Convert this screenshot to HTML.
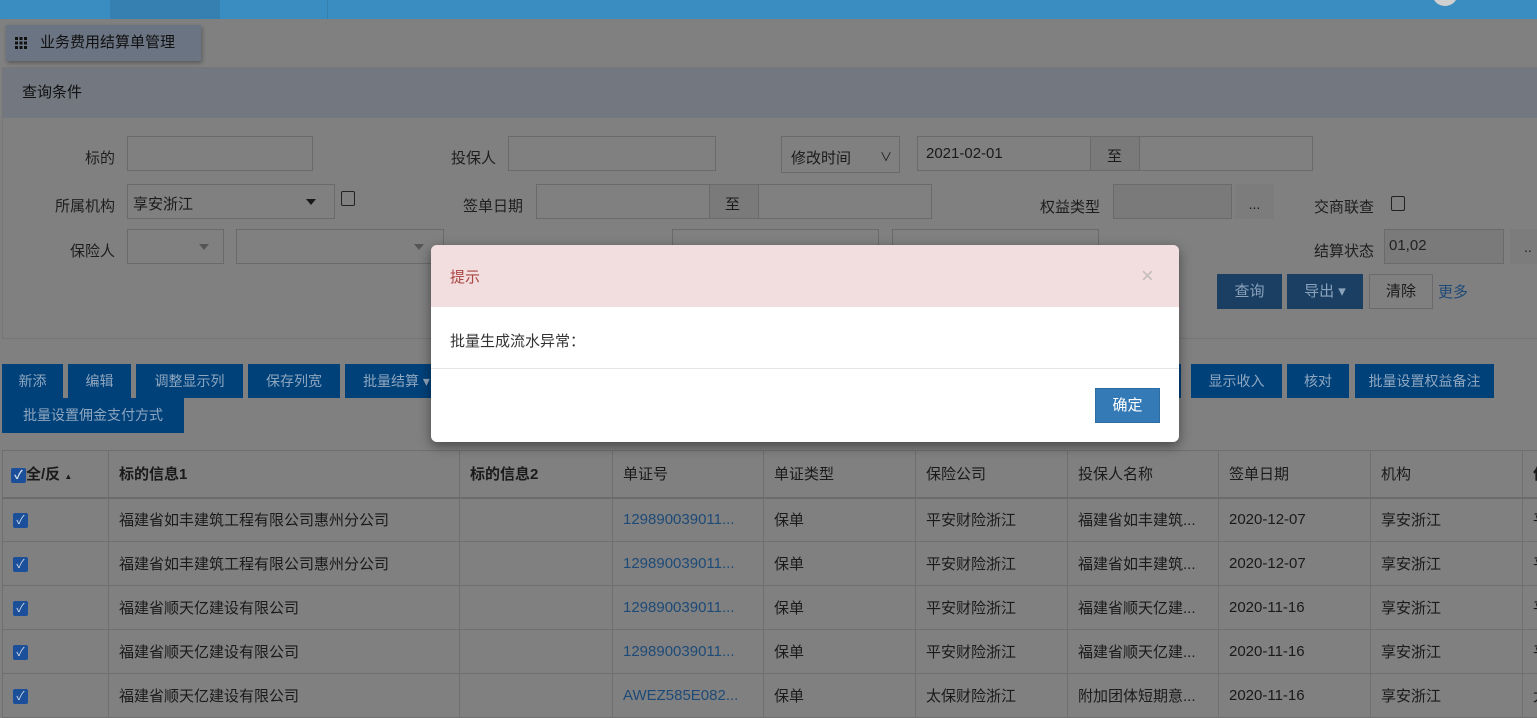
<!DOCTYPE html>
<html><head><meta charset="utf-8"><style>
*{margin:0;padding:0;box-sizing:border-box}
body{width:1537px;height:716px;overflow:hidden;background:#808080;font-family:"Liberation Sans","Noto Sans CJK SC",sans-serif;font-size:14px;color:#1a1a1a;position:relative}
.a{position:absolute}
.inp{position:absolute;border:1px solid #6a6a6a;background:#808080;height:35px}
.lbl{position:absolute;text-align:right;font-size:15px;color:#1e1e1e}
.btn{position:absolute;background:#00417a;color:#8fa6bf;font-size:14px;text-align:center;line-height:34px;height:34px}
.tri{position:absolute;width:0;height:0;border-left:5px solid transparent;border-right:5px solid transparent;border-top:6px solid #1a1a1a}
table{position:absolute;left:2px;top:450px;border-collapse:collapse;font-size:15px;table-layout:fixed;width:1560px}
td,th{border:1px solid #6f6f6f;height:44px;padding:0 10px;text-align:left;white-space:nowrap;overflow:hidden}
th{font-weight:bold;height:47px;border-bottom:2px solid #6c6c6c}
.lk{color:#1d4a77}
.cb{display:inline-block;width:15px;height:15px;background:#1b4f99;border-radius:2px;color:#cfd8e6;font-size:12px;line-height:15px;text-align:center;vertical-align:middle}
</style></head><body>
<div class="a" style="left:0;top:0;width:1537px;height:19px;background:#3a8dc0"></div>
<div class="a" style="left:110px;top:0;width:110px;height:19px;background:#3580b0"></div>
<div class="a" style="left:327px;top:0;width:1px;height:19px;background:#337fae"></div>
<div class="a" style="left:1432px;top:-20px;width:26px;height:26px;border-radius:50%;background:#d0d0d0"></div>

<div class="a" style="left:6px;top:25px;width:195px;height:36px;background:#6a7482;box-shadow:1px 2px 4px rgba(0,0,0,.3);font-size:15px;line-height:36px;padding-left:34px;color:#111;white-space:nowrap">业务费用结算单管理</div>
<svg class="a" style="left:15px;top:37px" width="12" height="12"><g fill="#111"><rect x="0" y="0" width="3" height="3"/><rect x="4.5" y="0" width="3" height="3"/><rect x="9" y="0" width="3" height="3"/><rect x="0" y="4.5" width="3" height="3"/><rect x="4.5" y="4.5" width="3" height="3"/><rect x="9" y="4.5" width="3" height="3"/><rect x="0" y="9" width="3" height="3"/><rect x="4.5" y="9" width="3" height="3"/><rect x="9" y="9" width="3" height="3"/></g></svg>

<div class="a" style="left:2px;top:67px;width:1540px;height:272px;border:1px solid #767676"></div>
<div class="a" style="left:3px;top:68px;width:1540px;height:50px;background:#727780;line-height:50px;padding-left:19px;font-size:15px;color:#111">查询条件</div>

<div class="lbl" style="left:40px;top:147px;width:75px">标的</div>
<div class="inp" style="left:127px;top:136px;width:186px"></div>
<div class="lbl" style="left:420px;top:147px;width:76px">投保人</div>
<div class="inp" style="left:508px;top:136px;width:208px"></div>
<div class="inp" style="left:781px;top:136px;width:119px;height:37px;padding:10px 0 0 9px;font-size:15px">修改时间</div>
<div class="a" style="left:880px;top:148px;font-size:12px">∨</div>
<div class="inp" style="left:917px;top:136px;width:174px;padding:8px 0 0 8px;font-size:15px">2021-02-01</div>
<div class="inp" style="left:1090px;top:136px;width:50px;background:#7a7a7a;padding:8px 0 0 16px;font-size:15px">至</div>
<div class="inp" style="left:1139px;top:136px;width:174px"></div>

<div class="lbl" style="left:30px;top:195px;width:85px">所属机构</div>
<div class="inp" style="left:127px;top:184px;width:208px;padding:8px 0 0 5px;font-size:15px">享安浙江</div>
<div class="tri" style="left:306px;top:199px"></div>
<div class="a" style="left:341px;top:191px;width:14px;height:15px;border:1px solid #222;border-radius:2px"></div>
<div class="lbl" style="left:430px;top:195px;width:93px">签单日期</div>
<div class="inp" style="left:536px;top:184px;width:174px"></div>
<div class="inp" style="left:709px;top:184px;width:50px;background:#7a7a7a;padding:8px 0 0 15px;font-size:15px">至</div>
<div class="inp" style="left:758px;top:184px;width:174px"></div>
<div class="lbl" style="left:1010px;top:196px;width:90px">权益类型</div>
<div class="inp" style="left:1113px;top:184px;width:119px;background:#7a7a7a"></div>
<div class="a" style="left:1235px;top:184px;width:39px;height:35px;background:#7c7c7c;text-align:center;line-height:40px">...</div>
<div class="lbl" style="left:1290px;top:196px;width:84px">交商联查</div>
<div class="a" style="left:1391px;top:196px;width:14px;height:15px;border:1px solid #222;border-radius:2px"></div>

<div class="lbl" style="left:40px;top:240px;width:75px">保险人</div>
<div class="inp" style="left:127px;top:229px;width:97px"></div>
<div class="tri" style="left:199px;top:244px;border-top-color:#555"></div>
<div class="inp" style="left:236px;top:229px;width:208px"></div>
<div class="tri" style="left:414px;top:244px;border-top-color:#555"></div>
<div class="inp" style="left:672px;top:229px;width:207px"></div>
<div class="inp" style="left:892px;top:229px;width:207px"></div>
<div class="lbl" style="left:1280px;top:240px;width:94px">结算状态</div>
<div class="inp" style="left:1384px;top:229px;width:120px;background:#7a7a7a;padding:7px 0 0 4px;font-size:15px;color:#222">01,02</div>
<div class="a" style="left:1510px;top:229px;width:30px;height:35px;background:#7c7c7c;padding:10px 0 0 14px">..</div>

<div class="btn" style="left:1217px;top:274px;width:65px;height:35px;line-height:35px;background:#1b3f63;color:#8aa2bb;font-size:15px">查询</div>
<div class="btn" style="left:1287px;top:274px;width:76px;height:35px;line-height:35px;background:#1b3f63;color:#8aa2bb;font-size:15px">导出 ▾</div>
<div class="a" style="left:1369px;top:274px;width:64px;height:35px;border:1px solid #6a6a6a;text-align:center;line-height:33px;font-size:15px">清除</div>
<div class="a" style="left:1438px;top:281px;color:#1d4a77;font-size:15px">更多</div>

<div class="btn" style="left:2px;top:364px;width:61px">新添</div>
<div class="btn" style="left:68px;top:364px;width:63px">编辑</div>
<div class="btn" style="left:136px;top:364px;width:107px">调整显示列</div>
<div class="btn" style="left:248px;top:364px;width:92px">保存列宽</div>
<div class="btn" style="left:345px;top:364px;width:100px;text-align:left;padding-left:18px">批量结算 ▾</div>
<div class="btn" style="left:1150px;top:364px;width:31px"></div>
<div class="btn" style="left:1191px;top:364px;width:91px">显示收入</div>
<div class="btn" style="left:1287px;top:364px;width:62px">核对</div>
<div class="btn" style="left:1355px;top:364px;width:139px">批量设置权益备注</div>
<div class="btn" style="left:2px;top:398px;width:182px;height:35px;line-height:35px">批量设置佣金支付方式</div>

<table>
<colgroup><col style="width:106px"><col style="width:351px"><col style="width:153px"><col style="width:151px"><col style="width:152px"><col style="width:152px"><col style="width:151px"><col style="width:152px"><col style="width:152px"><col style="width:40px"></colgroup>
<tr><th style="padding:0 0 0 8px"><span class="cb">✓</span>全/反 <span style="font-size:8px">▲</span></th><th>标的信息1</th><th>标的信息2</th><th style="font-weight:normal">单证号</th><th style="font-weight:normal">单证类型</th><th style="font-weight:normal">保险公司</th><th style="font-weight:normal">投保人名称</th><th style="font-weight:normal">签单日期</th><th style="font-weight:normal">机构</th><th>保</th></tr>
<tr><td><span class="cb">✓</span></td><td>福建省如丰建筑工程有限公司惠州分公司</td><td></td><td class="lk">129890039011...</td><td>保单</td><td>平安财险浙江</td><td>福建省如丰建筑...</td><td>2020-12-07</td><td>享安浙江</td><td>平</td></tr>
<tr><td><span class="cb">✓</span></td><td>福建省如丰建筑工程有限公司惠州分公司</td><td></td><td class="lk">129890039011...</td><td>保单</td><td>平安财险浙江</td><td>福建省如丰建筑...</td><td>2020-12-07</td><td>享安浙江</td><td>平</td></tr>
<tr><td><span class="cb">✓</span></td><td>福建省顺天亿建设有限公司</td><td></td><td class="lk">129890039011...</td><td>保单</td><td>平安财险浙江</td><td>福建省顺天亿建...</td><td>2020-11-16</td><td>享安浙江</td><td>平</td></tr>
<tr><td><span class="cb">✓</span></td><td>福建省顺天亿建设有限公司</td><td></td><td class="lk">129890039011...</td><td>保单</td><td>平安财险浙江</td><td>福建省顺天亿建...</td><td>2020-11-16</td><td>享安浙江</td><td>平</td></tr>
<tr><td><span class="cb">✓</span></td><td>福建省顺天亿建设有限公司</td><td></td><td class="lk">AWEZ585E082...</td><td>保单</td><td>太保财险浙江</td><td>附加团体短期意...</td><td>2020-11-16</td><td>享安浙江</td><td>太</td></tr>
</table>

<div class="a" style="left:431px;top:245px;width:748px;height:197px;background:#fff;border-radius:6px;box-shadow:0 4px 12px rgba(0,0,0,.45);overflow:hidden">
 <div style="height:62px;background:#f2dede;color:#a94442;font-size:15px;padding:21px 0 0 19px">提示</div>
 <div class="a" style="left:710px;top:18px;color:#c5bcbc;font-size:22px">×</div>
 <div class="a" style="left:19px;top:85px;font-size:15px;color:#333">批量生成流水异常：</div>
 <div class="a" style="left:0;top:123px;width:748px;height:1px;background:#e5e5e5"></div>
 <div class="a" style="left:664px;top:143px;width:65px;height:35px;background:#337ab7;border:1px solid #2e6da4;color:#fff;text-align:center;line-height:33px;font-size:15px">确定</div>
</div>
</body></html>
